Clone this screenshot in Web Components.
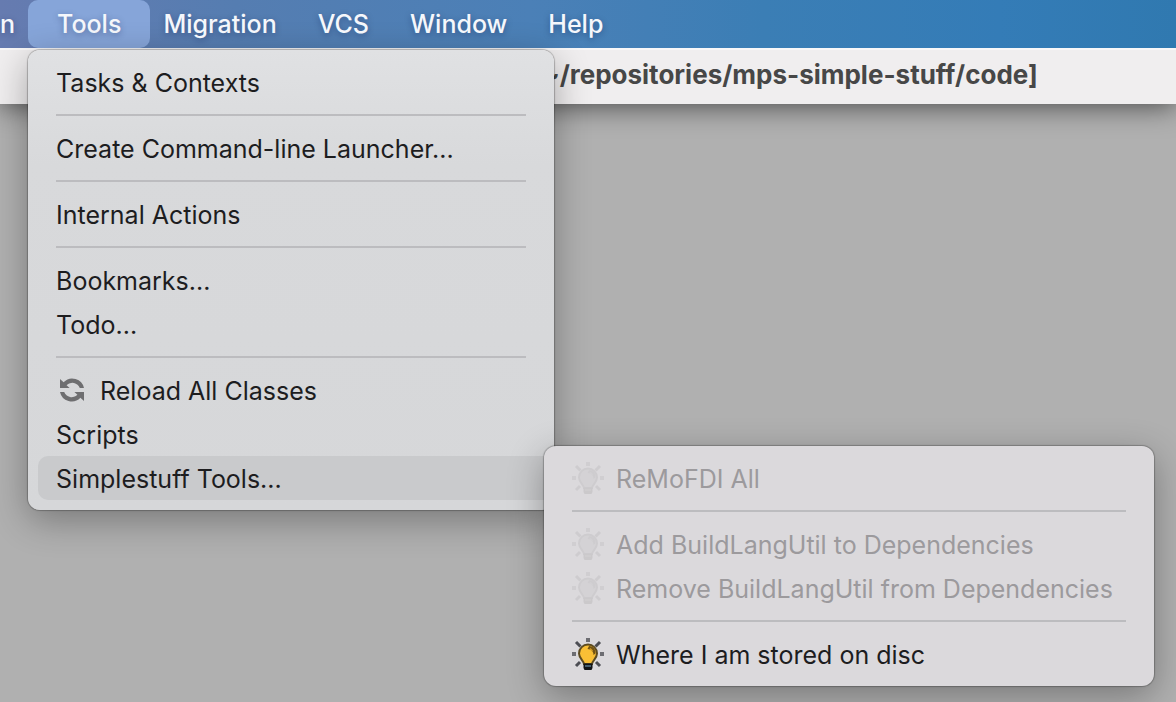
<!DOCTYPE html>
<html lang="en">
<head>
<meta charset="utf-8">
<title>Tools menu</title>
<style>
  body {
    margin: 0;
    min-height: 100vh;
    background: #b0b0b0;
    font-family: Inter, "Liberation Sans", sans-serif;
    font-size: 25px;
    line-height: 44px;
    color: #1d1d1f;
  }
</style>
</head>
<body>
<app-menubar>
  <menu-entry>n</menu-entry>
  <menu-entry open>Tools
    <menu-panel slot="panel">
      <menu-item>Tasks &amp; Contexts</menu-item>
      <menu-divider></menu-divider>
      <menu-item>Create Command-line Launcher...</menu-item>
      <menu-divider></menu-divider>
      <menu-item>Internal Actions</menu-item>
      <menu-divider></menu-divider>
      <menu-item>Bookmarks...</menu-item>
      <menu-item>Todo...</menu-item>
      <menu-divider></menu-divider>
      <menu-item><reload-icon slot="icon"></reload-icon>Reload All Classes</menu-item>
      <menu-item>Scripts</menu-item>
      <menu-item active>Simplestuff Tools...
        <menu-panel slot="submenu" nested>
          <menu-item disabled><bulb-icon slot="icon"></bulb-icon>ReMoFDI All</menu-item>
          <menu-divider></menu-divider>
          <menu-item disabled><bulb-icon slot="icon"></bulb-icon>Add BuildLangUtil to Dependencies</menu-item>
          <menu-item disabled><bulb-icon slot="icon"></bulb-icon>Remove BuildLangUtil from Dependencies</menu-item>
          <menu-divider></menu-divider>
          <menu-item><bulb-icon slot="icon"></bulb-icon>Where I am stored on disc</menu-item>
        </menu-panel>
      </menu-item>
    </menu-panel>
  </menu-entry>
  <menu-entry>Migration</menu-entry>
  <menu-entry>VCS</menu-entry>
  <menu-entry>Window</menu-entry>
  <menu-entry>Help</menu-entry>
</app-menubar>
<window-title>~/repositories/mps-simple-stuff/code]</window-title>

<script>
  function define(name, html, setup) {
    const template = document.createElement('template');
    template.innerHTML = html;
    customElements.define(name, class extends HTMLElement {
      constructor() {
        super();
        this.attachShadow({ mode: 'open' }).append(template.content.cloneNode(true));
      }
      connectedCallback() { if (setup) setup(this); }
    });
  }

  define('app-menubar', `
    <style>
      :host { display: block; position: relative; z-index: 2; height: 48px;
        background: linear-gradient(90deg, #667bb0 0, #557db1 20%, #4b80b7 45%, #3b7eb5 65%, #347cb7 85%, #3079b0 100%); }
      nav { display: flex; height: 100%; }
    </style>
    <nav><slot></slot></nav>`);

  define('menu-entry', `
    <style>
      :host { display: block; position: relative; color: #f5f7fb; }
      button { all: unset; box-sizing: border-box; display: block; height: 48px; padding: 0 20px 0 21px; font-weight: 500;
        line-height: 48px; white-space: nowrap; text-shadow: 0 2px 6px rgba(0,20,70,.35); }
      :host(:first-child) button { padding: 0 13px 0 0; }
      :host([open]) { margin-right: -8px; }
      :host([open]) button { padding: 0 29px; border-radius: 10px; background: #86a5d9; }
      ::slotted(menu-panel) { position: absolute; left: 0; top: 50px; }
    </style>
    <button type="button"><slot></slot></button>
    <slot name="panel"></slot>`);

  define('menu-panel', `
    <style>
      :host { display: block; box-sizing: border-box; width: 526px; padding: 10px; border-radius: 12px;
        background: linear-gradient(#e0e1e3, #d8d9db 25%, #d6d7d9);
        box-shadow: 0 0 1px 1px rgba(0,0,0,.24), 0 10px 36px rgba(0,0,0,.32);
        color: #1d1d1f; }
      :host([nested]) { width: 610px; background: #dbd9dc; }
    </style>
    <div role="menu"><slot></slot></div>`);

  define('menu-item', `
    <style>
      :host { display: block; position: relative; }
      button { all: unset; box-sizing: border-box; display: flex; align-items: center; gap: 12px;
        width: 100%; height: 44px; padding: 2px 18px 0; border-radius: 10px; white-space: nowrap; }
      :host([active]) button { background: #c9cacc; border-radius: 10px 0 0 10px; }
      :host([disabled]) button { color: #9c9a9d; }
      :host([disabled]) ::slotted(bulb-icon) { filter: grayscale(1) brightness(.7) opacity(.08); }
      ::slotted(menu-panel) { position: absolute; left: 100%; top: -10px; }
      ::slotted([slot=icon]) { margin-top: -2px; }
    </style>
    <button type="button" role="menuitem"><slot name="icon"></slot><span><slot></slot></span></button>
    <slot name="submenu"></slot>`,
    host => { host.shadowRoot.querySelector('button').disabled = host.hasAttribute('disabled'); });

  define('menu-divider', `
    <style>
      :host { display: block; padding: 10px 18px; }
      hr { height: 2px; margin: 0; border: 0; background: #bcbcbf; }
    </style>
    <hr>`);

  define('reload-icon', `
    <style>:host { display: block; width: 32px; height: 32px; } svg { display: block; }</style>
    <svg width="32" height="32" viewBox="0 0 32 32" fill="#6e6e70" aria-hidden="true">
      <path d="M4 5L7.6 8.2A12 12 0 0 1 28 14H23.8A8 8 0 0 0 10.6 11.2L13.6 14H4Z"/>
      <path transform="rotate(180 16 16)" d="M4 5L7.6 8.2A12 12 0 0 1 28 14H23.8A8 8 0 0 0 10.6 11.2L13.6 14H4Z"/>
    </svg>`);

  define('bulb-icon', `
    <style>:host { display: block; width: 32px; height: 32px; } svg { display: block; }</style>
    <svg width="32" height="32" viewBox="0 0 32 32" aria-hidden="true">
      <path d="M14 0h4v4h-4zM0 14h4v4H0zM28 14h4v4h-4z" fill="#6d6d72"/>
      <path d="M4 4L8.500 8.500M28 4L23.500 8.500M4 28L8 24M28 28L24 24" stroke="#4c4d53" stroke-width="3"/>
      <path d="M12 26C12 23 7 20.500 7 15.500A9 9 0 0 1 25 15.500C25 20.500 20 23 20 26Z" fill="#f9bf35" stroke="#5d4b20" stroke-width="2"/>
      <path d="M17 8C21 8 24 11 23.500 15.500L21.500 17C21.500 13 19 11.500 15.500 11Z" fill="#735414"/>
      <path d="M18 10.500l2.500 2.500" stroke="#d59d25" stroke-width="1.500"/>
      <path d="M11.500 25.500h9V30L19.500 32h-7L11.500 30Z" fill="#101316"/>
      <path d="M13 28h6" stroke="#56788e" stroke-width="1.500"/>
    </svg>`);

  define('window-title', `
    <style>
      :host { display: block; position: relative; z-index: 1; height: 56px; box-sizing: border-box;
        padding-left: 542px; border-top: 2px solid #f8f7f8; background: #f0eeef;
        box-shadow: 0 2px 28px rgba(0,0,0,.6); }
      h1 { margin: 0; font-size: 26px; line-height: 50px; font-weight: 700; color: #474747; white-space: nowrap; }
    </style>
    <h1><slot></slot></h1>`);
</script>
</body>
</html>
